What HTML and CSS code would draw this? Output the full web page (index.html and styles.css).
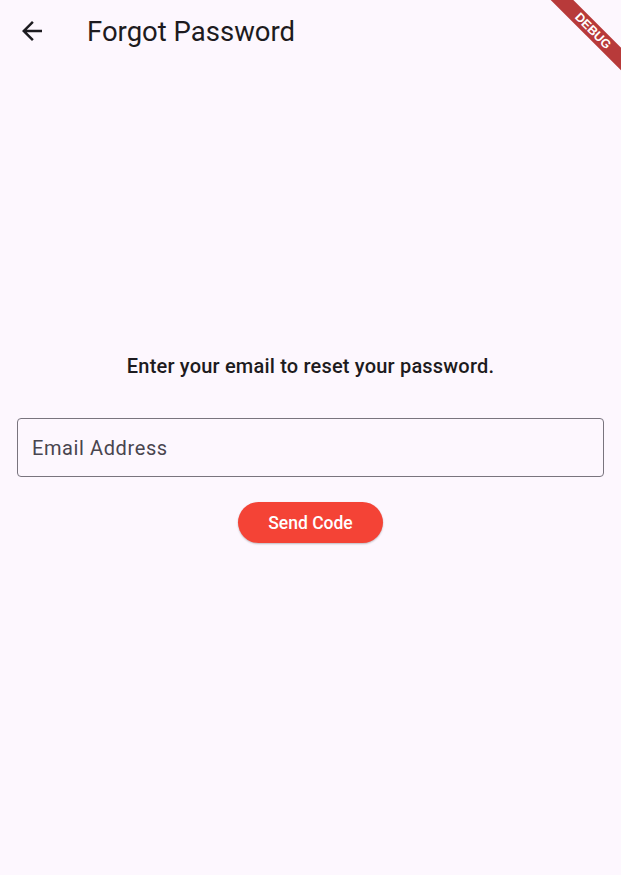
FILE: index.html
```html
<!DOCTYPE html>
<html>
<head>
<meta charset="utf-8">
<link rel="stylesheet" href="styles.css">
</head>
<body>
<header class="appbar">
  <button class="back" aria-label="Back">
    <svg width="24" height="24" viewBox="0 0 24 24"><path d="M20 11H7.83l5.59-5.59L12 4l-8 8 8 8 1.41-1.41L7.83 13H20v-2z" fill="#1d1b20"/></svg>
  </button>
  <h1 class="title">Forgot Password</h1>
</header>
<main class="content">
  <p class="prompt">Enter your email to reset your password.</p>
  <div class="field">
    <span class="label">Email Address</span>
  </div>
  <button class="send">Send Code</button>
</main>
<div class="debug">DEBUG</div>
</body>
</html>
```
FILE: styles.css
```css
html, body {
  margin: 0;
  padding: 0;
  background: #fdf7fe;
  font-family: Roboto, "Noto Sans", sans-serif;
  color: #1d1b20;
  height: 100%;
  overflow: hidden;
}
.appbar {
  height: 62px;
  display: flex;
  align-items: center;
}
.back {
  width: 30px;
  height: 30px;
  margin-left: 17px;
  padding: 0;
  border: none;
  background: none;
  display: flex;
  align-items: center;
  justify-content: center;
}
.back svg {
  width: 30px;
  height: 30px;
}
.title {
  margin: 0 0 0 40px;
  font-size: 27.5px;
  font-weight: 400;
  letter-spacing: 0;
}
.content {
  padding: 290px 17px 0;
  display: flex;
  flex-direction: column;
  align-items: center;
}
.prompt {
  margin: 0;
  font-size: 20px;
  font-weight: 500;
  letter-spacing: 0.19px;
  line-height: 28px;
}
.field {
  margin-top: 38px;
  align-self: stretch;
  height: 57px;
  border: 1px solid #79747e;
  border-radius: 4px;
  display: flex;
  align-items: center;
  padding-left: 14px;
}
.label {
  font-size: 20px;
  letter-spacing: 0.6px;
  color: #49454f;
}
.send {
  margin-top: 25px;
  height: 41px;
  padding: 0 30px;
  border: none;
  border-radius: 21px;
  background: #f44336;
  color: #fff;
  font-family: Roboto, sans-serif;
  font-size: 17.5px;
  font-weight: 500;
  box-shadow: 0 1px 2px rgba(0,0,0,0.25);
}
.debug {
  position: absolute;
  top: 23px;
  right: -32px;
  width: 120px;
  height: 16px;
  background: #b83a3a;
  color: #fff;
  font-family: "Liberation Sans", sans-serif;
  font-size: 12.5px;
  font-weight: 700;
  line-height: 16px;
  text-align: center;
  transform: rotate(45deg);
}
```
